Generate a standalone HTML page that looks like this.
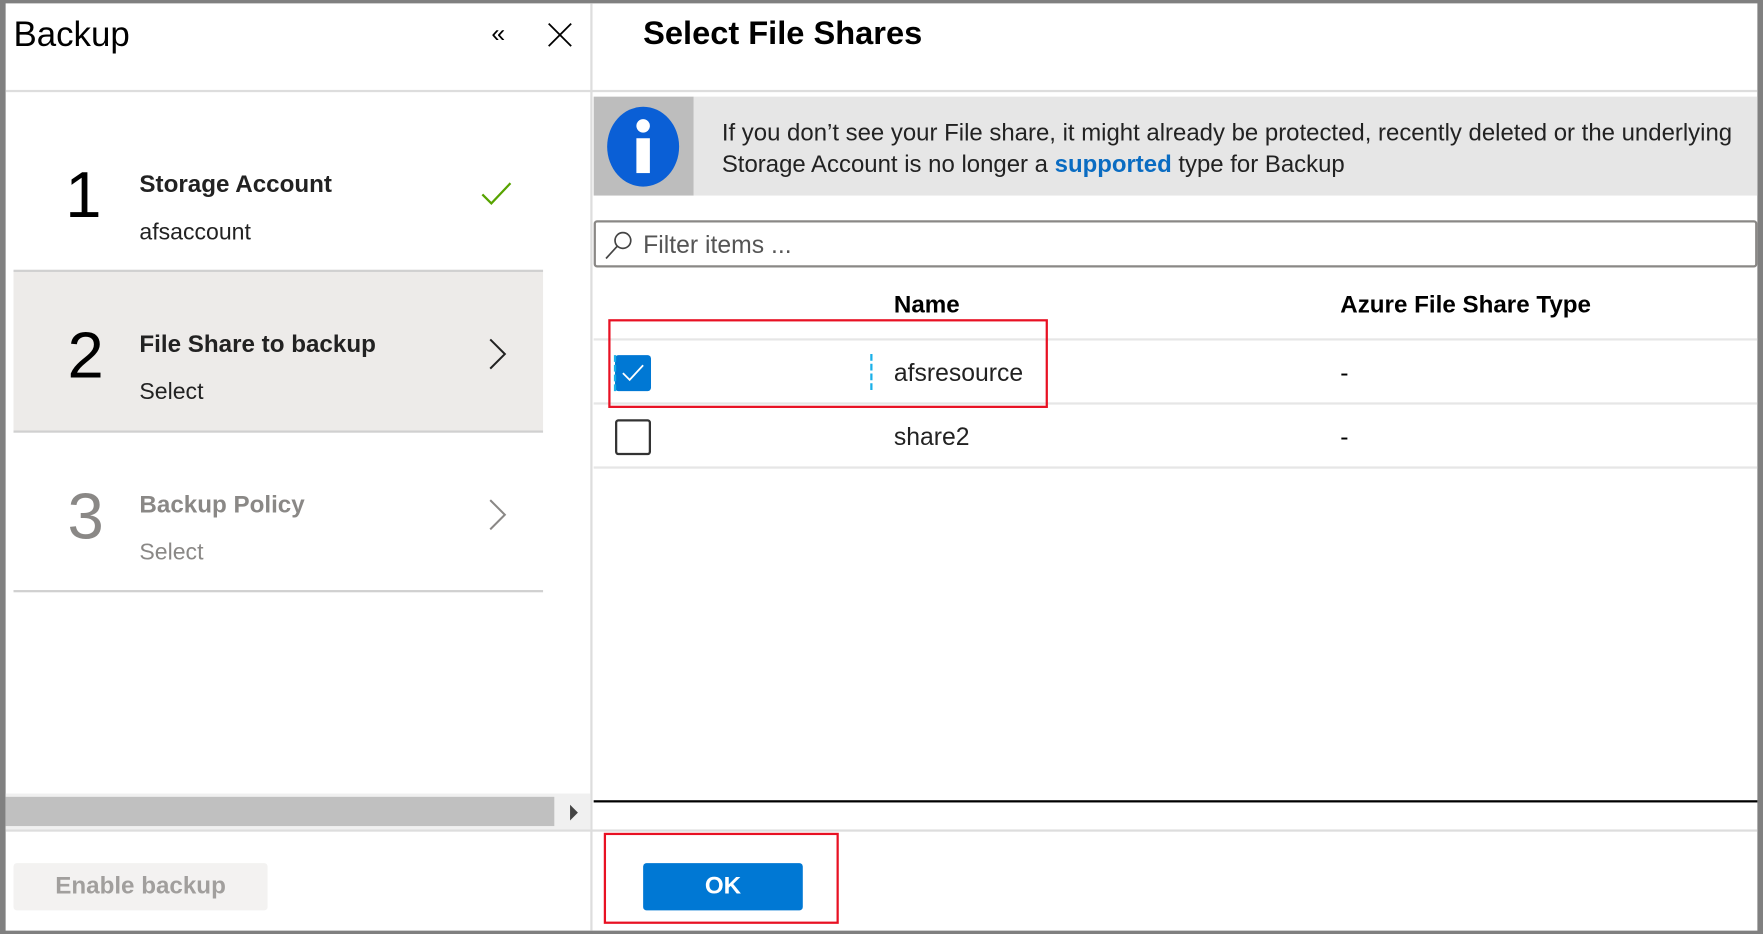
<!DOCTYPE html>
<html><head><meta charset="utf-8"><style>
html,body{margin:0;padding:0;background:#fff;overflow:hidden}
#w{width:1568px;height:831px;transform:scale(1.12436,1.1239);transform-origin:0 0;position:relative;font-family:"Liberation Sans",sans-serif;color:#000}
.a{position:absolute}
.t{position:absolute;white-space:nowrap}
</style></head><body><div id="w">
<div class="a" style="left:0;top:0;width:1568px;height:831px;box-sizing:border-box;border:3px solid #808080;border-left-width:5px;border-right-width:5px"></div>
<div class="a" style="left:525px;top:3px;width:2px;height:825px;background:#ddd"></div>
<div class="a" style="left:5px;top:80px;width:1558px;height:2px;background:#ddd"></div>
<div class="t" style="left:12px;top:13px;font-size:31px">Backup</div>
<div class="t" style="left:437px;top:17px;font-size:22px">«</div>
<svg class="a" style="left:487px;top:20px" width="22" height="22"><path d="M1 1L21 21M21 1L1 21" stroke="#000" stroke-width="1.6"/></svg>
<!-- step1 -->
<div class="t" style="left:58px;top:140px;font-size:58px">1</div>
<div class="t" style="left:124px;top:152px;font-size:21.5px;font-weight:bold;color:#222">Storage Account</div>
<div class="t" style="left:124px;top:195px;font-size:20.5px;color:#222">afsaccount</div>
<svg class="a" style="left:428px;top:161px" width="28" height="22"><path d="M1 12L9 20L26 2" fill="none" stroke="#57a300" stroke-width="2"/></svg>
<div class="a" style="left:12px;top:240px;width:471px;height:2px;background:#d0d0d0"></div>
<div class="a" style="left:12px;top:242px;width:471px;height:141px;background:#edebe9"></div>
<div class="t" style="left:60px;top:283px;font-size:58px">2</div>
<div class="t" style="left:124px;top:294px;font-size:21.5px;font-weight:bold;color:#222">File Share to backup</div>
<div class="t" style="left:124px;top:337px;font-size:20.5px;color:#222">Select</div>
<svg class="a" style="left:434px;top:301px" width="18" height="28"><path d="M2 1L15 14L2 27" fill="none" stroke="#222" stroke-width="1.8"/></svg>
<div class="a" style="left:12px;top:383px;width:471px;height:2px;background:#d0d0d0"></div>
<div class="t" style="left:60px;top:426px;font-size:58px;color:#8a8886">3</div>
<div class="t" style="left:124px;top:437px;font-size:21.5px;font-weight:bold;color:#8a8886">Backup Policy</div>
<div class="t" style="left:124px;top:480px;font-size:20.5px;color:#8a8886">Select</div>
<svg class="a" style="left:434px;top:444px" width="18" height="28"><path d="M2 1L15 14L2 27" fill="none" stroke="#8a8886" stroke-width="1.8"/></svg>
<div class="a" style="left:12px;top:525px;width:471px;height:2px;background:#d0d0d0"></div>
<!-- scrollbar -->
<div class="a" style="left:5px;top:706px;width:520px;height:32px;background:#f0f0f0"></div>
<div class="a" style="left:5px;top:709px;width:488px;height:26px;background:#c0c0c0"></div>
<svg class="a" style="left:506px;top:715px" width="10" height="16"><path d="M1 1L8 8L1 15Z" fill="#444"/></svg>
<div class="a" style="left:5px;top:738px;width:1558px;height:2px;background:#ddd"></div>
<div class="a" style="left:12px;top:768px;width:226px;height:42px;background:#f3f2f1;border-radius:3px"></div>
<div class="t" style="left:12px;top:776px;width:226px;text-align:center;font-size:21.5px;font-weight:bold;color:#a19f9d">Enable backup</div>
<!-- right -->
<div class="t" style="left:572px;top:14px;font-size:29px;font-weight:bold">Select File Shares</div>
<div class="a" style="left:528px;top:86px;width:89px;height:88px;background:#bdbdbd"></div>
<div class="a" style="left:617px;top:86px;width:946px;height:88px;background:#e6e6e6"></div>
<div class="a" style="left:540px;top:95px;width:64px;height:71px;border-radius:50%;background:#0a5fd6"></div>
<div class="a" style="left:566px;top:106px;width:12px;height:12px;border-radius:50%;background:#fff"></div>
<div class="a" style="left:566px;top:123px;width:12px;height:31px;background:#fff"></div>
<div class="t" style="left:642px;top:104px;font-size:21.3px;color:#222;line-height:28px">If you don’t see your File share, it might already be protected, recently deleted or the underlying<br>Storage Account is no longer a <b style="color:#0a6cc2">supported</b> type for Backup</div>
<div class="a" style="left:528px;top:196px;width:1035px;height:42px;box-sizing:border-box;border:2px solid #8a8886;border-radius:3px"></div>
<svg class="a" style="left:537px;top:204px" width="28" height="28"><circle cx="17" cy="10" r="7" fill="none" stroke="#444" stroke-width="1.5"/><path d="M12 15L2 26" stroke="#444" stroke-width="1.5"/></svg>
<div class="t" style="left:572px;top:205px;font-size:22px;color:#555">Filter items ...</div>
<div class="t" style="left:795px;top:259px;font-size:21.5px;font-weight:bold">Name</div>
<div class="t" style="left:1192px;top:259px;font-size:21.5px;font-weight:bold">Azure File Share Type</div>
<div class="a" style="left:528px;top:301px;width:1035px;height:2px;background:#e6e6e6"></div>
<div class="a" style="left:528px;top:358px;width:1035px;height:2px;background:#e6e6e6"></div>
<div class="a" style="left:528px;top:415px;width:1035px;height:2px;background:#e6e6e6"></div>
<div class="a" style="left:547px;top:316px;width:32px;height:32px;background:#0078d4;border-radius:3px"></div>
<div class="a" style="left:546px;top:316px;width:0;height:32px;border-left:2px dashed #1ab0e8"></div>
<svg class="a" style="left:552px;top:323px" width="22" height="18"><path d="M2 9L8 15L20 2" fill="none" stroke="#fff" stroke-width="1.6"/></svg>
<div class="a" style="left:774px;top:315px;width:0;height:32px;border-left:2px dashed #1ab0e8"></div>
<div class="t" style="left:795px;top:319px;font-size:22px;color:#222">afsresource</div>
<div class="t" style="left:1192px;top:319px;font-size:22px">-</div>
<div class="a" style="left:547px;top:373px;width:32px;height:32px;box-sizing:border-box;border:2px solid #333;border-radius:3px"></div>
<div class="t" style="left:795px;top:376px;font-size:22px;color:#222">share2</div>
<div class="t" style="left:1192px;top:376px;font-size:22px">-</div>
<div class="a" style="left:541px;top:284px;width:391px;height:79px;box-sizing:border-box;border:2px solid #e81123"></div>
<div class="a" style="left:528px;top:712px;width:1035px;height:2px;background:#000"></div>
<div class="a" style="left:537px;top:741px;width:209px;height:81px;box-sizing:border-box;border:2px solid #e81123"></div>
<div class="a" style="left:572px;top:768px;width:142px;height:42px;background:#0078d4;border-radius:3px"></div>
<div class="t" style="left:572px;top:776px;width:142px;text-align:center;font-size:21.5px;font-weight:bold;color:#fff">OK</div>
</div></body></html>
